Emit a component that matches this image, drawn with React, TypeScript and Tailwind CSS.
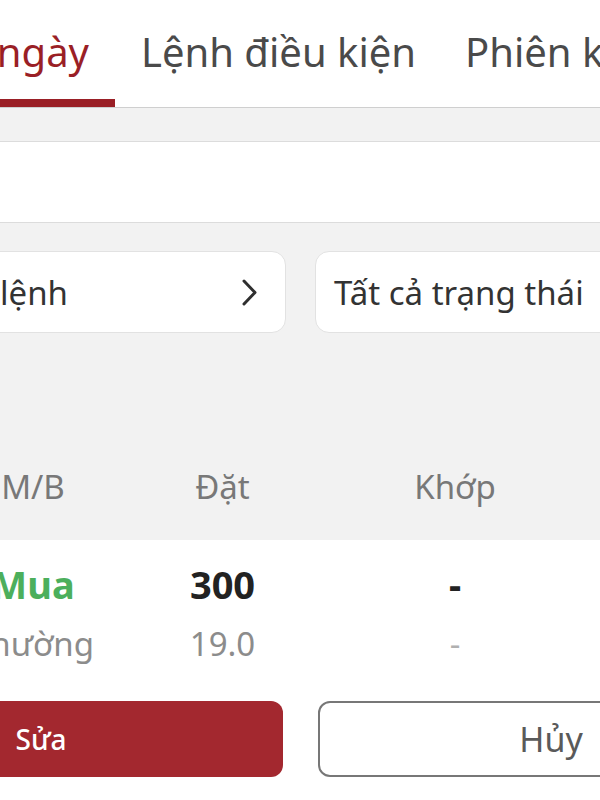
import { ReactNode } from "react";

function Tab({ label, active }: { label: string; active?: boolean }) {
  return (
    <div className="flex flex-col whitespace-nowrap">
      <span
        className={
          "px-[26px] text-[40px] leading-[44px] " +
          (active ? "text-[#9a1f26]" : "text-[#4a4a4a]")
        }
      >
        {label}
      </span>
      <div className={"mt-[25px] h-[8px] " + (active ? "bg-[#9a1f26]" : "bg-transparent")} />
    </div>
  );
}

function Cell({ children, className }: { children: ReactNode; className: string }) {
  return <div className={"shrink-0 whitespace-nowrap text-center " + className}>{children}</div>;
}

export default function App() {
  return (
    <div className="h-[800px] w-[600px] overflow-hidden bg-white font-['Noto_Sans',sans-serif]">
      {/* Tabs */}
      <div className="flex h-[108px] items-end border-b border-[#cfcfcf]">
        <div className="flex w-[115px] shrink-0 justify-end">
          <Tab label="Lệnh trong ngày" active />
        </div>
        <Tab label="Lệnh điều kiện" />
        <div className="-ml-[3px]">
          <Tab label="Phiên kế tiếp" />
        </div>
      </div>

      <div className="h-[34px] border-b border-[#dcdcdc] bg-[#f2f2f2]" />
      <div className="h-[81px] border-b border-[#dcdcdc] bg-white" />

      {/* Filters + table header */}
      <div className="bg-[#f2f2f2] pt-[28px]">
        <div className="flex gap-[29px]">
          <div className="-ml-[40px] flex h-[82px] w-[326px] shrink-0 items-center rounded-[14px] border border-[#e2e2e2] bg-white pl-[40px] pr-[27px]">
            <div className="flex w-[67px] shrink-0 justify-end whitespace-nowrap pt-[2px] text-[33px] leading-[40px] text-[#333]">
              Tất cả loại lệnh
            </div>
            <div className="flex-1" />
            <svg width="17" height="27" viewBox="0 0 17 27" fill="none">
              <polyline
                points="3,2 14,13.5 3,25"
                stroke="#2f2f2f"
                strokeWidth="3"
                strokeLinecap="round"
                strokeLinejoin="round"
              />
            </svg>
          </div>
          <div className="flex h-[82px] w-[400px] shrink-0 items-center rounded-[14px] border border-[#e2e2e2] bg-white pl-[18px]">
            <span className="whitespace-nowrap pt-[2px] text-[33px] leading-[40px] text-[#333]">
              Tất cả trạng thái
            </span>
          </div>
        </div>

        <div className="flex pb-[33px] pt-[134px] text-[33px] leading-[40px] text-[#787878]">
          <Cell className="-ml-[68px] w-[202px]">M/B</Cell>
          <Cell className="w-[177px]">Đặt</Cell>
          <Cell className="w-[288px]">Khớp</Cell>
        </div>
      </div>

      {/* Order row */}
      <div className="bg-white pt-[22px]">
        <div className="flex text-[38px] font-bold leading-[44px]">
          <Cell className="-ml-[68px] w-[202px] text-[#4caf5c]">Mua</Cell>
          <Cell className="w-[177px] text-[#222]">300</Cell>
          <Cell className="w-[288px] text-[#222]">-</Cell>
        </div>
        <div className="mt-[18px] flex text-[33px] leading-[40px] text-[#8c8c8c]">
          <Cell className="-ml-[68px] w-[202px]">Thường</Cell>
          <Cell className="w-[177px]">19.0</Cell>
          <Cell className="w-[288px] text-[#b0b0b0]">-</Cell>
        </div>

        <div className="mt-[37px] flex gap-[35px]">
          <button className="-ml-[201px] flex h-[76px] w-[484px] shrink-0 items-center justify-center rounded-[12px] bg-[#a3282f] text-[28px] font-medium text-white">
            Sửa
          </button>
          <button className="flex h-[76px] w-[466px] shrink-0 items-center justify-center rounded-[12px] border-2 border-[#777] bg-white text-[34px] text-[#5a5a5a]">
            Hủy
          </button>
        </div>
      </div>
    </div>
  );
}
